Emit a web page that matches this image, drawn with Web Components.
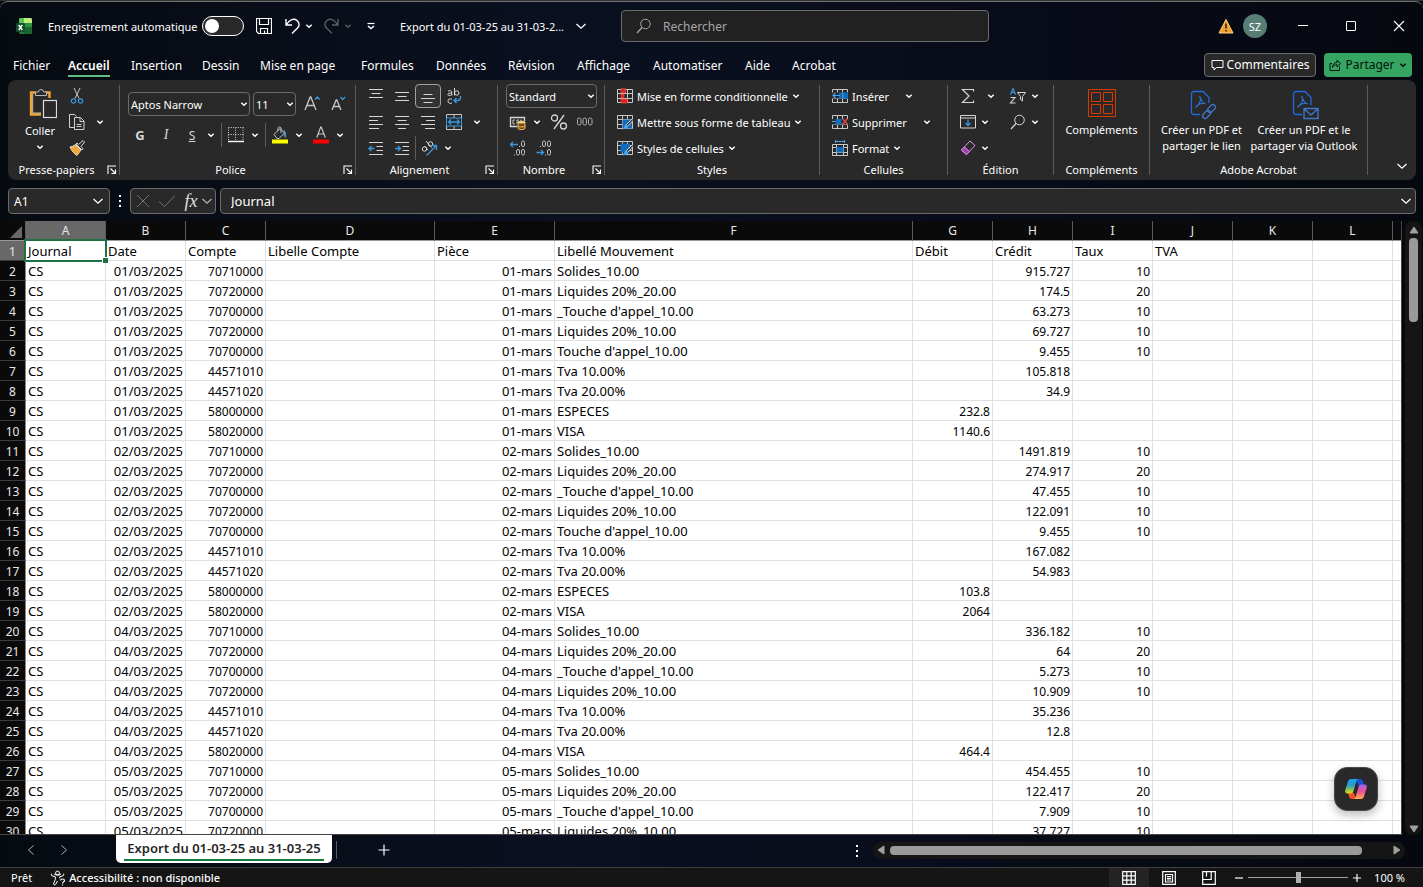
<!DOCTYPE html>
<html lang="fr">
<head>
<meta charset="utf-8">
<title>Export du 01-03-25 au 31-03-25</title>
<style>
  html, body { margin: 0; height: 100%; }
  body { font-family: "Noto Sans", "Open Sans", sans-serif; font-size: 11px; color: #fff; background: #0a0f1c; overflow: hidden; }
</style>
</head>
<body>
<xl-app></xl-app>

<script>
const BASE = `
  *, *::before, *::after { box-sizing: border-box; }
  button, input, select { font: inherit; color: inherit; background: none; border: 0; padding: 0; margin: 0; outline: 0; }
  button { display: inline-flex; align-items: center; justify-content: center; flex: none; white-space: nowrap; }
  a { color: inherit; text-decoration: none; }
`;

class XlElement extends HTMLElement {
  connectedCallback() {
    if (this.shadowRoot) return;
    const root = this.attachShadow({ mode: 'open' });
    root.innerHTML = `<style>${BASE}${this.css()}</style>${this.html()}`;
  }
  css() { return ''; }
  html() { return ''; }
}

/* name: [width, height, markup] — drawn in currentColor unless a colour is part of the icon */
const GRID_BACK = '<path d="M.5 1.500h15v13H.5zM5.500 1.500v13M10.500 1.500v13M.5 5.500h15M.5 10.500h15" stroke="#c8c8c8"/>';
const ICONS = {
  chev: [8, 8, '<path d="M1.300 2.800l2.700 2.400 2.700-2.400" stroke-width="1.500"/>'],
  bigchev: [12, 12, '<path d="M1.500 4l4.500 4.200L10.500 4" stroke-width="1.300"/>'],
  left: [12, 12, '<path d="M8.500 1.500L3.500 6l5 4.500"/>'],
  right: [12, 12, '<path d="M3.500 1.500L8.500 6l-5 4.500"/>'],
  plus: [12, 12, '<path d="M6 .5v11M.5 6h11" stroke-width="1.200"/>'],
  minus: [10, 10, '<path d="M1 5h8" stroke-width="1.200"/>'],
  plusS: [10, 10, '<path d="M1 5h8M5 1v8" stroke-width="1.200"/>'],
  excel: [16, 16, '<g stroke="none"><rect x="3" width="13" height="16" rx="1.500" fill="#1f7a3a"/><path d="M4.500 0H9v5H3V1.500A1.500 1.500 0 014.500 0z" fill="#56c45b"/><path d="M8 0h6.500A1.500 1.500 0 0116 1.500V5H8z" fill="#c0ee7c"/><path d="M3 5h13v5H3z" fill="#2a9447"/><path d="M8 9h8v5.500a1.500 1.500 0 01-1.500 1.500H8z" fill="#1c6430"/><rect y="5" width="9" height="9" rx="1.500" fill="#12512e"/></g><path d="M2.700 7l3.600 5M6.300 7l-3.600 5" stroke="#fff" stroke-width="1.400"/>'],
  save: [16, 16, '<path d="M.5.5h15v15h-13l-2-2zM3.500.5v6h9v-6M4.500 15.500v-5h7v5M8.500 12.500v3" stroke-width="1.200"/>'],
  undo: [18, 18, '<path d="M2 2v6h6M2.500 7.500C5.500 2.500 10 1 13 3.500s2.500 5.500.5 7.500L8 16.500" stroke-width="1.400"/>'],
  redo: [18, 18, '<path d="M15 2v6H9M14.500 7.500C11.500 2.500 7 1 4 3.500S1.500 9 3.500 11L9 16.500" stroke-width="1.400"/>'],
  qat: [10, 10, '<path d="M1.500 2.500h7" stroke-width="1.200"/><path d="M2 5l3 2.500L8 5" stroke-width="1.500"/>'],
  search: [16, 16, '<circle cx="9.500" cy="6" r="4.800"/><path d="M6 9.500L1 15" stroke-width="1.200"/>'],
  warn: [16, 16, '<path d="M8 1.500L15 15H1z" fill="#f0a030" stroke="#ffd27a"/><path d="M8 5.500v5M8 12v1.500" stroke="#3a2a10" stroke-width="1.600"/>'],
  min: [12, 12, '<path d="M1 5.500h10"/>'],
  max: [12, 12, '<rect x="1.500" y="1.500" width="9" height="9" rx=".5"/>'],
  close: [12, 12, '<path d="M1 1l10 10M11 1L1 11" stroke-width="1.100"/>'],
  comment: [13, 12, '<path d="M1 1.500h11v7H5.500L3 11V8.500H1z"/>'],
  share: [12, 12, '<path d="M3 4.500H1v7h9.500v-4M3.500 8.500C3.500 5 6 3.500 8 3.500V1.200L11.500 4.600 8 8V5.700C6 5.700 4.500 6.500 3.500 8.500z"/>'],
  paste: [34, 32, '<g transform="translate(6)"><path d="M7 4.500H2v22h10M16 4.500h4.500V10" stroke="#f0a33a" stroke-width="2.400"/><path d="M3.700 6v19H12" stroke="#fbe0b0" stroke-width=".8"/><path d="M6.500 7.500V4h3a2.500 2.500 0 015 0h3v3.500z" stroke="#b8b8b8" fill="#292929"/><rect x="14.500" y="12.500" width="13" height="17" fill="#292929" stroke="#dcdcdc" stroke-width="1.200"/></g>'],
  cut: [14, 16, '<path d="M4 0l5 10.500M10 0L5 10.500" stroke="#c8c8c8"/><circle cx="3.500" cy="13" r="2.200" stroke="#3a96dd" stroke-width="1.200"/><circle cx="10.500" cy="13" r="2.200" stroke="#3a96dd" stroke-width="1.200"/>'],
  copy: [18, 18, '<path d="M7 14.500H1.500v-13h5l2 2" stroke="#d0d0d0"/><path d="M6.500 4.500h6l3.500 3.500v8.500H6.500zM12 4.500V8.500h4M8.500 11.500h5M8.500 13.500h5" stroke="#d0d0d0" fill="#292929"/>'],
  brush: [16, 16, '<path d="M1 7c2 0 4-1 5.500-2.500L12 10c-1.500 2-3 4-4 5.500C5.500 14 2.500 11 1 7z" fill="#f0a840" stroke="#f8d290"/><path d="M1 7c2 0 4-1 5.500-2.500L12 10" stroke="#d8d8d8" fill="none"/><path d="M7 4l6 6 1-1.500-2-2L15.500 2 14 .5 9.500 4.500 8 3z" fill="#292929" stroke="#d8d8d8"/>'],
  Abig: [16, 18, '<path d="M1 15L6.200 2h.6L12 15M3 10.500h7" stroke="#c8c8c8" stroke-width="1.300"/><path d="M11 4.500L13.300 2l2.300 2.500" stroke="#3a96dd" stroke-width="1.300"/>'],
  Asmall: [16, 18, '<path d="M2 15L6.200 5h.6L11 15M3.500 11.500h6" stroke="#c8c8c8" stroke-width="1.300"/><path d="M10.500 2l2.300 2.500L15 2" stroke="#3a96dd" stroke-width="1.300"/>'],
  border: [16, 16, '<path d="M.5.5h15M.5 7.500h15" stroke="#d0d0d0" stroke-dasharray="1 1.330"/><path d="M.5.5v14M7.500.5v14M15 .5v14" stroke="#d0d0d0" stroke-dasharray="1 1.330"/><path d="M0 14.500h16" stroke="#fff" stroke-width="1.400"/>'],
  fill: [18, 18, '<path d="M3 8.500l6-6 4.500 4.500-5.500 5.500H6z" stroke="#c8c8c8"/><path d="M7 5V2.500a1.500 1.500 0 013 0V7" stroke="#c8c8c8"/><path d="M12.500 4c2 1 2.500 4 2 7.500-1.500-1-1.500-3-2-5" fill="#5a9fd8" stroke="#5a9fd8" stroke-width=".6"/><path d="M1 15.500h16" stroke="#ff0" stroke-width="4"/>'],
  fontcolor: [18, 18, '<path d="M4.800 11.500L8.700 1h.6l3.900 10.500M6 8h6" stroke="#c8c8c8" stroke-width="1.200"/><path d="M1 15.500h16" stroke="#f00" stroke-width="4"/>'],
  top: [16, 16, '<path d="M1 1.500h14M3.500 5.500h9M1 9.500h14"/>'],
  mid: [16, 16, '<path d="M1 4.500h14M3.500 8.500h9M1 12.500h14"/>'],
  bot: [16, 16, '<path d="M3.500 6.500h9M1 10.500h14M3.500 14.500h9"/>'],
  al: [16, 16, '<path d="M1 2.500h14M1 6.500h9M1 10.500h14M1 14.500h10"/>'],
  ac: [16, 16, '<path d="M1 2.500h14M3.500 6.500h9M1 10.500h14M4 14.500h8"/>'],
  ar: [16, 16, '<path d="M1 2.500h14M6 6.500h9M1 10.500h14M5 14.500h10"/>'],
  merge: [16, 16, '<path d="M.5.500h15v15H.5zM8 .5v4M8 12v4" stroke="#c8c8c8"/><path d="M.5 4h15v8H.5z" stroke="#3a96dd" fill="#292929"/><path d="M2.500 8h11M5 5.500L2.500 8 5 10.500M11 5.500L13.500 8 11 10.500" stroke="#3a96dd" stroke-width="1.300"/>'],
  outdent: [16, 16, '<path d="M1 2.500h14M8.500 6.500h6.500M8.500 10.500h6.500M1 14.500h14"/><path d="M1 8.500h5.500M3.500 6L1 8.500 3.500 11" stroke="#3a96dd" stroke-width="1.300"/>'],
  indent: [16, 16, '<path d="M1 2.500h14M8.500 6.500h6.500M8.500 10.500h6.500M1 14.500h14"/><path d="M1 8.500h5.500M4 6l2.500 2.500L4 11" stroke="#3a96dd" stroke-width="1.300"/>'],
  money: [18, 16, '<path d="M8 12.500H1.500v-9h14V7" stroke="#d8d8d8" stroke-width="1.300"/><path d="M6 6H4v4h2M8 10V6h2M12 8V5.500" stroke="#c8c8c8"/><ellipse cx="12.500" cy="8.500" rx="3.800" ry="1.500" fill="#f8d488" stroke="#f8d488" stroke-width=".6"/><path d="M9 9.500v5c1 1.500 6 1.500 7 0v-5" fill="#6b4a12" stroke="#f8c060"/><path d="M9 12c1 1.300 6 1.300 7 0" stroke="#f8c060"/>'],
  pct: [18, 18, '<circle cx="4.500" cy="5" r="3" stroke-width="1.300"/><circle cx="13.500" cy="13" r="3" stroke-width="1.300"/><path d="M14 2L4 16" stroke-width="1.300"/>'],
  zeros: [18, 10, '<g stroke="#b0b0b0"><rect x="1.500" y="1" width="3.500" height="7" rx="1.700"/><rect x="7" y="1" width="3.500" height="7" rx="1.700"/><rect x="12.500" y="1" width="3.500" height="7" rx="1.700"/></g>'],
  decup: [16, 16, '<path d="M0 4.500h8M3 2L.5 4.500 3 7" stroke="#3a96dd" stroke-width="1.300"/><g stroke="#c0c0c0"><rect x="11.500" y="1" width="3" height="5.500" rx="1.500"/><rect x="6.500" y="9.500" width="3" height="5.500" rx="1.500"/><rect x="11.500" y="9.500" width="3" height="5.500" rx="1.500"/><path d="M9.500 6v1M4.500 14.500v1"/></g>'],
  decdn: [16, 16, '<path d="M.5 12.500h7M5 10l2.500 2.500L5 15" stroke="#3a96dd" stroke-width="1.300"/><g stroke="#c0c0c0"><rect x="6.500" y="1" width="3" height="5.500" rx="1.500"/><rect x="11.500" y="1" width="3" height="5.500" rx="1.500"/><rect x="11.500" y="9.500" width="3" height="5.500" rx="1.500"/><path d="M4.500 6v1M9.500 14.500v1"/></g>'],
  wrap: [16, 18, '<path d="M2 4.200c1.500-1 3.800-.8 3.800 1v3.300M5.800 6C3 6 1.800 6.500 1.800 7.500c0 1.500 3 1.300 4-.3M8.500 1v7.500M6 12.200c-3-1-4 .3-4 2s1.500 2.800 4 1.800"/><circle cx="10.800" cy="6" r="2.200"/><path d="M14.500 9v1.500c0 2-1 3-3 3H8M10.500 11L8 13.500l2.500 2.500" stroke="#3a96dd" stroke-width="1.400"/>'],
  orient: [18, 18, '<circle cx="4.500" cy="10" r="2.200"/><path d="M4.500 7l3.500 4M6 2l5.500 6.500"/><circle cx="10.500" cy="5" r="2.200"/><path d="M6.500 16.500l10-10M12 6.500h4.500V11" stroke="#3a96dd" stroke-width="1.300"/>'],
  cond: [16, 16, GRID_BACK + '<path d="M4 .8h4.500v4H4zM4 6h3v4H4zM4 11h6.500v4H4z" fill="#e02020" stroke="#ff5a50" stroke-width=".6"/>'],
  tabfmt: [16, 16, GRID_BACK + '<path d="M5.500 5.500H15v9H5.500z" fill="#0f6cbd" stroke="none"/><path d="M15.500 4.500L9 11l1.500 1.500 5-5.500" fill="#292929" stroke="#d8d8d8"/><path d="M9.500 10.500c-3 0-1.500 3-4 4.500 3 .8 6-.5 5.500-3z" fill="#4aa3e8" stroke="none"/>'],
  cellstyle: [16, 16, GRID_BACK + '<path d="M3.500 3.500H13v9H3.500z" fill="#0f6cbd" stroke="none"/><path d="M15.500 4.500L9 11l1.500 1.500 5-5.500" fill="#292929" stroke="#d8d8d8"/><path d="M9.500 10.500c-3 0-1.500 3-4 4.500 3 .8 6-.5 5.500-3z" fill="#4aa3e8" stroke="none"/>'],
  insert: [16, 16, GRID_BACK + '<path d="M0 4.500h16v6H0z" fill="#292929" stroke="none"/><path d="M7 4.500h9v6H7z" fill="#0f6cbd" stroke="none"/><path d="M11 4.500v6" stroke="#4aa3e8"/><path d="M.8 7.500H8M3.500 5L.8 7.500 3.500 10" stroke="#4aa3e8" stroke-width="1.200"/>'],
  remove: [16, 16, GRID_BACK + '<path d="M0 5h16v5.500H0z" fill="#292929" stroke="none"/><path d="M3.500 5h6v5.500h-6z" fill="#0f6cbd" stroke="none"/><path d="M0 7.500h3.500" stroke="#4aa3e8"/><path d="M10.500 4.500l5 6M15.500 4.500l-5 6" stroke="#e04a4a" stroke-width="1.300"/>'],
  format: [16, 16, '<path d="M.5 4.500h15v11H.5zM4.500 4.500v11M11.500 4.500v11M.5 12.500h15M.5 7.500h15" stroke="#c8c8c8"/><path d="M4.500 7h7v5.500h-7z" fill="#0f6cbd" stroke="none"/><path d="M3.500 1.500h9M3.500 0v3M12.500 0v3" stroke="#4aa3e8"/>'],
  sigma: [14, 16, '<path d="M12.500 3.500v-2h-11L8 8l-6.500 6.500h11v-2" stroke-width="1.200"/>'],
  sort: [18, 16, '<path d="M1.500 6.500L4 .500 6.500 6.500M2.500 4.500h3" stroke="#3a96dd" stroke-width="1.200"/><path d="M1.500 9.500H6L1.500 15H6.500" stroke-width="1.100"/><path d="M8.500 4.500h8L13.500 8.500V13l-2-1.500v-3z"/>'],
  filldown: [16, 14, '<path d="M.5.500h15v12.500H.5zM.5 3h15"/><path d="M8 4.500v6M5.500 8L8 10.500 10.500 8" stroke="#3a96dd" stroke-width="1.300"/>'],
  eraser: [16, 16, '<path d="M10 1l5 4.500-8.500 9L1.500 10z" stroke="#e098e8"/><path d="M4.500 7l5 4.500-3 3.200-5-4.700z" fill="#a83ab8" stroke="#e098e8"/>'],
  addins: [28, 28, '<path d="M.5.500h27v27H.5zM3.500 3.500h9v9h-9zM15.500 3.500h9v9h-9zM3.500 15.500h9v9h-9zM15.500 15.500h9v9h-9z" stroke="#d83b01"/>'],
  pdflink: [32, 30, '<g transform="translate(3)"><path d="M11 24.500H5a2.500 2.500 0 01-2.500-2.500V4A2.500 2.500 0 015 1.500h9l6 6V13" stroke="#1f6be0" stroke-width="1.300"/><path d="M10.500 6c2 5 3 7 6.500 8M11.500 9c0 3-2 6-5 8.500 2-3 6-4.500 9.500-4" stroke="#2f6fd0" stroke-width="1.200"/><g stroke="#3f74c8" stroke-width="1.400"><rect x="18" y="16" width="9" height="5" rx="2.500" transform="rotate(-45 22.500 18.500)"/><rect x="13" y="22" width="9" height="5" rx="2.500" transform="rotate(-45 17.500 24.500)"/></g></g>'],
  pdfmail: [32, 30, '<g transform="translate(3)"><path d="M11 24.500H5a2.500 2.500 0 01-2.500-2.500V4A2.500 2.500 0 015 1.500h9l6 6V15" stroke="#1f6be0" stroke-width="1.300"/><path d="M10.500 6c2 5 3 7 6.500 8M11.500 9c0 3-2 6-5 8.500 2-3 6-4.500 9.500-4" stroke="#2f6fd0" stroke-width="1.200"/><path d="M13 18.500h14v10H13zM13.500 19l6.500 6 6.500-6" stroke="#3f74c8" stroke-width="1.400"/></g>'],
  launch: [10, 10, '<path d="M1 9V1h8M3.500 3.500l5 5M4.500 8.500h4v-4" stroke-width="1.100"/>'],
  cancel: [14, 14, '<path d="M1 1l12 12M13 1L1 13"/>'],
  check: [18, 14, '<path d="M1 7.500L6.500 12.500 17 1.500"/>'],
  dots: [4, 14, '<path d="M1 1h2v2H1zM1 6h2v2H1zM1 11h2v2H1z" fill="currentColor" stroke="none"/>'],
  corner: [12, 12, '<path d="M12 0v12H0z" fill="#686868" stroke="none"/>'],
  access: [16, 16, '<circle cx="7.500" cy="3" r="1.900"/><path d="M2 3.500C1 4 1 5.500 2 5.800l3.300 1v2.500L3.500 14c.3 1.200 1.800 1.200 2.300.2L7.500 11M13 3.500c1 .5 1 2 0 2.300l-3.300 1v1.500M4 4l2 1h3l2-1" /><path d="M10.500 10.500c0-2 4-2 4 0 0 1.500-2 1.500-2 3M12.500 14.500v1" stroke-width="1.200"/>'],
  vnormal: [14, 14, '<path d="M.7.700h12.600v12.600H.7zM4.800.7v12.600M9.200.7v12.600M.7 4.800h12.600M.7 9.200h12.600" stroke-width="1.200"/>'],
  vpage: [14, 14, '<path d="M.7.700h12.600v12.600H.7zM3.500 3.500h7v7.500h-7zM5 5.500h4M5 7.300h4M5 9h4" stroke-width="1.200"/>'],
  vbreak: [14, 14, '<path d="M.7.700h12.600v12.600H.7zM.7 8.500h8.500V.7M4.500.7V5.500" stroke-width="1.200"/>'],
  triup: [10, 8, '<path d="M5 1l4 6H1z" fill="#a0a0a0" stroke="#a0a0a0" stroke-linejoin="round"/>'],
  tridn: [10, 8, '<path d="M5 7l4-6H1z" fill="#a0a0a0" stroke="#a0a0a0" stroke-linejoin="round"/>'],
  tril: [8, 10, '<path d="M1 5l6-4v8z" fill="#a0a0a0" stroke="#a0a0a0" stroke-linejoin="round"/>'],
  trir: [8, 10, '<path d="M7 5L1 1v8z" fill="#a0a0a0" stroke="#a0a0a0" stroke-linejoin="round"/>'],
  copilot: [24, 24, `<defs>
    <linearGradient id="a" x1="0" y1="0" x2="0" y2="1"><stop offset="0" stop-color="#1aa0f0"/><stop offset=".45" stop-color="#2a9ec8"/><stop offset=".75" stop-color="#8cc850"/><stop offset="1" stop-color="#f0d020"/></linearGradient>
    <linearGradient id="b" x1="0" y1="0" x2="0" y2="1"><stop offset="0" stop-color="#a860f0"/><stop offset=".5" stop-color="#f05090"/><stop offset="1" stop-color="#ffb050"/></linearGradient></defs>
    <g stroke="none"><path d="M12 2h4.500c1.500 0 2 1 2.500 2.500L20 8h-6z" fill="#1b4fd8"/><path d="M12 22H7.500C6 22 5.500 21 5 19.500L4 16h6z" fill="#f0502a"/><path d="M7 2h7.500c-1 0-1.700 1-2 2L9.500 14c-.4 1.500-1 2.500-2.500 2.500H3.500C1.500 16.500.8 15 1.300 13L4 4.500C4.500 3 5.500 2 7 2z" fill="url(#a)"/><path d="M17 22H9.500c1 0 1.700-1 2-2l3-10c.4-1.500 1-2.500 2.500-2.500h3.500c2 0 2.700 1.500 2.200 3.500L20 19.500c-.5 1.500-1.500 2.500-3 2.500z" fill="url(#b)"/></g>`],
};

customElements.define('xl-icon', class extends XlElement {
  css() { return `:host { display: block; flex: none; } svg { display: block; }`; }
  html() {
    const [w, h, body] = ICONS[this.getAttribute('name')];
    return `<svg width="${w}" height="${h}" viewBox="0 0 ${w} ${h}" fill="none" stroke="currentColor" aria-hidden="true">${body}</svg>`;
  }
});
const icon = (name) => `<xl-icon name="${name}"></xl-icon>`;

/* ---------- title bar ---------- */
customElements.define('xl-titlebar', class extends XlElement {
  css() { return `
    :host { display: flex; align-items: center; height: 49px; border-top: 1px solid #6e7072; padding-left: 16px; border-radius: 8px 8px 0 0; }
    .auto { display: flex; align-items: center; margin-left: 16px; }
    .auto span { width: 154px; }
    .switch { appearance: none; width: 42px; height: 20px; border: 1px solid #fff; border-radius: 10px; background: #292929; display: flex; align-items: center; padding: 0 2px; }
    .switch::before { content: ""; width: 14px; height: 14px; border-radius: 50%; background: #fff; }
    .tools { display: flex; align-items: center; margin-left: 11px; }
    .tools button { height: 28px; }
    .w18 { width: 18px; } .w14 { width: 14px; }
    .undo { margin-left: 11px; } .redo { margin-left: 7px; } .off { color: #5c5c5c; } .qat { margin-left: 9px; }
    .file { margin-left: 22px; gap: 11px; }
    .search { flex: 0 1 368px; min-width: 120px; margin-left: 34px; height: 32px; display: flex; align-items: center; gap: 11px; padding: 0 14px; border: 1px solid #6b6b6b; border-radius: 4px; background: #212121; color: #a8a8a8; font-size: 12px; }
    .search input { flex: 1; min-width: 0; }
    .search input::placeholder { color: #a8a8a8; opacity: 1; }
    .space { flex: 1; }
    .avatar { width: 24px; height: 24px; border-radius: 50%; background: #587d74; margin: 0 12px 0 9px; }
    .win { width: 48px; height: 32px; }
  `; }
  html() { return `
    ${icon('excel')}
    <label class="auto"><span>Enregistrement automatique</span><input class="switch" type="checkbox" role="switch"></label>
    <div class="tools">
      <button class="w18" aria-label="Enregistrer">${icon('save')}</button>
      <button class="w18 undo" aria-label="Annuler">${icon('undo')}</button>
      <button class="w14" aria-label="Options d’annulation">${icon('chev')}</button>
      <button class="w18 redo off" aria-label="Rétablir">${icon('redo')}</button>
      <button class="w14 off" aria-label="Options de rétablissement">${icon('chev')}</button>
      <button class="w14 qat" aria-label="Personnaliser">${icon('qat')}</button>
      <button class="file"><span>Export du 01-03-25 au 31-03-2...</span>${icon('bigchev')}</button>
    </div>
    <label class="search">${icon('search')}<input type="text" placeholder="Rechercher" aria-label="Rechercher"></label>
    <div class="space"></div>
    ${icon('warn')}
    <button class="avatar">SZ</button>
    <button class="win" aria-label="Réduire">${icon('min')}</button>
    <button class="win" aria-label="Agrandir">${icon('max')}</button>
    <button class="win" aria-label="Fermer">${icon('close')}</button>`; }
});

/* ---------- ribbon tabs ---------- */
customElements.define('xl-tabs', class extends XlElement {
  css() { return `
    :host { display: flex; align-items: center; height: 30px; padding: 0 11px 0 13px; font-size: 12px; line-height: 18px; }
    nav { display: grid; grid-template-columns: 55px 63px 71px 58px 101px 75px 72px 69px 76px 92px 47px auto; justify-content: start; justify-items: start; flex: 1; }
    nav a { border-bottom: 2px solid transparent; padding: 4px 0 0; white-space: nowrap; }
    nav a[aria-current] { font-weight: 600; border-color: #5fbf82; }
    .act { height: 24px; border-radius: 4px; }
    .comments { width: 112px; gap: 3px; border: 1px solid #6b6b6b; background: #292929; }
    .share { width: 88px; gap: 4px; margin-left: 8px; background: #36a562; color: #04140a; }
  `; }
  html() {
    const tabs = ['Fichier', 'Accueil', 'Insertion', 'Dessin', 'Mise en page', 'Formules', 'Données', 'Révision', 'Affichage', 'Automatiser', 'Aide', 'Acrobat'];
    return `<nav>${tabs.map(t => `<a href="#"${t === 'Accueil' ? ' aria-current="page"' : ''}>${t}</a>`).join('')}</nav>
    <button class="act comments">${icon('comment')}<span>Commentaires</span></button>
    <button class="act share">${icon('share')}<span>Partager</span>${icon('chev')}</button>`;
  }
});

/* ---------- ribbon group: controls in the slot, caption below ---------- */
customElements.define('xl-group', class extends XlElement {
  css() { return `
    :host { display: flex; flex-direction: column; flex: none; position: relative; padding-top: 3px; }
    :host::after { content: ""; width: 1px; background: #5c5c5c; position: absolute; right: 0; top: 5px; bottom: 5px; }
    .body { height: 79px; }
    footer { display: flex; align-items: center; height: 16px; line-height: 16px; padding-right: 1px; }
    footer span { flex: 1; text-align: center; }
    footer button { width: 14px; height: 14px; }
  `; }
  html() { return `
    <div class="body"><slot></slot></div>
    <footer><span>${this.getAttribute('label')}</span>${this.hasAttribute('launcher') ? `<button aria-label="Plus d’options">${icon('launch')}</button>` : ''}</footer>`; }
});

/* ---------- ribbon ---------- */
const b = (name, label, cls = '') => `<button class="i ${cls}" aria-label="${label}">${icon(name)}</button>`;
const c = (cls = '') => `<button class="c ${cls}" aria-label="Plus">${icon('chev')}</button>`;
customElements.define('xl-ribbon', class extends XlElement {
  css() { return `
    :host { display: flex; height: 100px; margin: 0 7px 0 8px; background: #292929; border-radius: 8px; color: #fff; }
    .row { display: flex; align-items: center; height: 26px; }
    .i { width: 26px; height: 24px; color: #d6d6d6; }
    .c { width: 11px; height: 24px; }
    .c20 { width: 20px; } .c8 { width: 8px; margin-right: 12px; }
    .on { border: 1px solid #a0a0a0; border-radius: 4px; background: #333; }
    .sep { width: 1px; height: 24px; background: #5c5c5c; }
    .g1 { width: 112px; } .g2 { width: 236px; } .g3 { width: 142px; } .g4 { width: 107px; } .g5 { width: 215px; }
    .g6 { width: 128px; } .g7 { width: 106px; } .g8 { width: 96px; } .g9 { width: 218px; }
    .clip { display: flex; padding-left: 8px; }
    .big { flex-direction: column; justify-content: flex-start; height: 77px; padding-top: 6px; line-height: 16px; }
    .big span { margin-top: 5px; }
    .paste { width: 48px; padding-top: 5px; }
    .paste span { margin: 3px 0 4px; }
    .field { position: relative; display: block; height: 24px; }
    .field select { appearance: none; width: 100%; height: 24px; padding: 0 2px; border: 1px solid #6b6b6b; border-radius: 4px; background: #292929; }
    .field xl-icon { position: absolute; right: 2px; top: 8px; pointer-events: none; }
    .font { width: 122px; } .size { width: 43px; } .num { width: 91px; margin-left: 1px; }
    .police { padding: 9px 0 0 7px; }
    .police .row { height: 24px; margin-bottom: 7px; }
    .police .first { padding-left: 1px; gap: 3px; }
    .first .i + .i { margin-left: -3px; }
    .police .sep { margin: 0 1px 0 5px; }
    .i b { font-size: 13px; font-weight: 700; } .i i { font: italic 14px "Liberation Serif", serif; } .i u { font-size: 12px; }
    .fc { margin-left: 4px; }
    .pad7 { padding-left: 7px; }
    .pad12 { padding-left: 12px; }
    .cmd { gap: 4px; height: 24px; }
    .cmd + .c { margin-left: 10px; width: 20px; }
    .r2 { margin-left: 4px; }
    .big2 { display: flex; }
    .wide { width: 95px; }
    .pdf { padding-left: 3px; }
    .pdf .a { width: 97px; } .pdf .b { width: 108px; }
    .pdf span { margin-top: 2px; }
    .pdf .big { padding-top: 7px; }
    .end { flex: 1; display: flex; align-items: flex-end; justify-content: flex-end; padding: 8px; }
  `; }
  html() { return `
    <xl-group class="g1" label="Presse-papiers" launcher><div class="clip">
      <button class="big paste">${icon('paste')}<span>Coller</span>${icon('chev')}</button>
      <div><div class="row">${b('cut', 'Couper')}</div><div class="row">${b('copy', 'Copier')}${c('c20')}</div><div class="row">${b('brush', 'Reproduire la mise en forme')}</div></div>
    </div></xl-group>
    <xl-group class="g2" label="Police" launcher><div class="police">
      <div class="row first">
        <label class="field font"><select aria-label="Police"><option>Aptos Narrow</option></select>${icon('chev')}</label>
        <label class="field size"><select aria-label="Taille"><option>11</option></select>${icon('chev')}</label>
        ${b('Abig', 'Augmenter la taille')}${b('Asmall', 'Réduire la taille')}
      </div>
      <div class="row">
        <button class="i"><b>G</b></button><button class="i"><i>I</i></button><button class="i"><u>S</u></button>${c()}
        <div class="sep"></div>${b('border', 'Bordures')}${c()}
        <div class="sep"></div>${b('fill', 'Remplissage')}${c()}${b('fontcolor', 'Couleur de police', 'fc')}${c()}
      </div>
    </div></xl-group>
    <xl-group class="g3" label="Alignement" launcher><div class="pad7">
      <div class="row">${b('top', 'En haut')}${b('mid', 'Au centre')}${b('bot', 'En bas', 'on')}${b('wrap', 'Renvoyer à la ligne')}</div>
      <div class="row">${b('al', 'Gauche')}${b('ac', 'Centrer')}${b('ar', 'Droite')}${b('merge', 'Fusionner')}${c('c20')}</div>
      <div class="row">${b('outdent', 'Diminuer le retrait')}${b('indent', 'Augmenter le retrait')}<div class="sep"></div>${b('orient', 'Orientation')}${c()}</div>
    </div></xl-group>
    <xl-group class="g4" label="Nombre" launcher><div class="pad7">
      <div class="row"><label class="field num"><select aria-label="Format de nombre"><option>Standard</option></select>${icon('chev')}</label></div>
      <div class="row">${b('money', 'Format comptable')}${c()}<div class="r2"></div>${b('pct', 'Pourcentage')}${b('zeros', 'Séparateur de milliers')}</div>
      <div class="row">${b('decup', 'Ajouter une décimale')}${b('decdn', 'Réduire les décimales')}</div>
    </div></xl-group>
    <xl-group class="g5" label="Styles"><div class="pad12">
      <div class="row"><button class="cmd">${icon('cond')}<span>Mise en forme conditionnelle</span>${icon('chev')}</button></div>
      <div class="row"><button class="cmd">${icon('tabfmt')}<span>Mettre sous forme de tableau</span>${icon('chev')}</button></div>
      <div class="row"><button class="cmd">${icon('cellstyle')}<span>Styles de cellules</span>${icon('chev')}</button></div>
    </div></xl-group>
    <xl-group class="g6" label="Cellules"><div class="pad12">
      <div class="row"><button class="cmd">${icon('insert')}<span>Insérer</span></button>${c()}</div>
      <div class="row"><button class="cmd">${icon('remove')}<span>Supprimer</span></button>${c()}</div>
      <div class="row"><button class="cmd">${icon('format')}<span>Format</span>${icon('chev')}</button></div>
    </div></xl-group>
    <xl-group class="g7" label="Édition"><div class="pad7">
      <div class="row">${b('sigma', 'Somme')}${c('c20')}${b('sort', 'Trier et filtrer', 'r2')}${c('c8')}</div>
      <div class="row">${b('filldown', 'Remplissage')}${c('c8')}${b('search', 'Rechercher', 'r2')}${c('c8')}</div>
      <div class="row">${b('eraser', 'Effacer')}${c('c8')}</div>
    </div></xl-group>
    <xl-group class="g8" label="Compléments"><button class="big wide">${icon('addins')}<span>Compléments</span></button></xl-group>
    <xl-group class="g9" label="Adobe Acrobat"><div class="big2 pdf">
      <button class="big a">${icon('pdflink')}<span>Créer un PDF et<br>partager le lien</span></button>
      <button class="big b">${icon('pdfmail')}<span>Créer un PDF et le<br>partager via Outlook</span></button>
    </div></xl-group>
    <div class="end"><button aria-label="Réduire le ruban">${icon('bigchev')}</button></div>`; }
});

/* ---------- formula bar ---------- */
customElements.define('xl-formula', class extends XlElement {
  css() { return `
    :host { display: flex; align-items: center; padding: 8px 7px 7px 8px; font-size: 12px; }
    .box { display: flex; align-items: center; height: 26px; border: 1px solid #6b6b6b; border-radius: 4px; background: #292929; }
    .box input { flex: 1; min-width: 0; }
    .name { width: 102px; padding: 0 5px; }
    .dots { margin: 0 8px; }
    .fx { width: 86px; color: #707070; padding-left: 5px; gap: 8px; }
    .fx .f { color: #e0e0e0; width: 18px; margin-left: -2px; font: italic 18px/20px "Liberation Serif", serif; }
    .fx .f + button { margin-left: -7px; color: #b0b0b0; }
    .text { flex: 1; margin-left: 4px; padding: 0 3px 0 10px; font-size: 13px; }
  `; }
  html() { return `
    <div class="box name"><input type="text" value="A1" aria-label="Zone Nom"><button aria-label="Liste des noms">${icon('bigchev')}</button></div>
    <div class="dots">${icon('dots')}</div>
    <div class="box fx"><button aria-label="Annuler">${icon('cancel')}</button><button aria-label="Entrer">${icon('check')}</button><button class="f">fx</button><button aria-label="Plus">${icon('bigchev')}</button></div>
    <div class="box text"><input type="text" value="Journal" aria-label="Barre de formule"><button aria-label="Développer">${icon('bigchev')}</button></div>`; }
});

/* ---------- sheet ---------- */
const SOL = 'Solides_10.00', L20 = 'Liquides 20%_20.00', UT = "_Touche d'appel_10.00", L10 = 'Liquides 20%_10.00', TA = "Touche d'appel_10.00", T10 = 'Tva 10.00%', T20 = 'Tva 20.00%', ESP = 'ESPECES', VISA = 'VISA';
/* [account, label, debit, credit, rate] per day of March */
const DAYS = {
  '01': [[70710000, SOL, '', 915.727, 10], [70720000, L20, '', 174.5, 20], [70700000, UT, '', 63.273, 10], [70720000, L10, '', 69.727, 10], [70700000, TA, '', 9.455, 10], [44571010, T10, '', 105.818, ''], [44571020, T20, '', 34.9, ''], [58000000, ESP, 232.8, '', ''], [58020000, VISA, 1140.6, '', '']],
  '02': [[70710000, SOL, '', 1491.819, 10], [70720000, L20, '', 274.917, 20], [70700000, UT, '', 47.455, 10], [70720000, L10, '', 122.091, 10], [70700000, TA, '', 9.455, 10], [44571010, T10, '', 167.082, ''], [44571020, T20, '', 54.983, ''], [58000000, ESP, 103.8, '', ''], [58020000, VISA, 2064, '', '']],
  '04': [[70710000, SOL, '', 336.182, 10], [70720000, L20, '', 64, 20], [70700000, UT, '', 5.273, 10], [70720000, L10, '', 10.909, 10], [44571010, T10, '', 35.236, ''], [44571020, T20, '', 12.8, ''], [58020000, VISA, 464.4, '', '']],
  '05': [[70710000, SOL, '', 454.455, 10], [70720000, L20, '', 122.417, 20], [70700000, UT, '', 7.909, 10], [70720000, L10, '', 37.727, 10]],
};
customElements.define('xl-sheet', class extends XlElement {
  css() { return `
    :host { display: flex; flex: 1; min-height: 0; }
    .view { flex: 1; min-width: 0; overflow: hidden; background: #fff; border-right: 1px solid #444; border-bottom: 1px solid #444; }
    table { table-layout: fixed; width: 100%; border-collapse: separate; border-spacing: 0; color: #000; font-size: 13px; }
    th, td { height: 20px; line-height: 17px; padding: 2px 2px 0; white-space: nowrap; overflow: hidden; border-right: 1px solid #e0e0e0; border-bottom: 1px solid #e0e0e0; text-align: left; font-weight: 400; }
    .n { text-align: right; font-size: 12px; }
    .d { text-align: right; }
    th { text-align: center; background: #0a0a0a; color: #e8e8e8; font-size: 12px; border-color: #5c5c5c; padding: 2px 0 0; }
    tbody th { border-right-color: #8a8a8a; border-bottom-color: #3c3c3c; }
    thead th { border-bottom-color: #9a9a9a; padding: 0; line-height: 19px; }
    th.sel { background: #686868; }
    .all xl-icon { float: right; margin: 3px 3px 0 0; }
    tr > :last-child { border-right: 0; }
    td.cur { position: relative; overflow: visible; }
    td.cur::before { content: ""; position: absolute; inset: -2px; border: 2px solid #1e7145; }
    td.cur::after { content: ""; position: absolute; right: -3px; bottom: -3px; width: 6px; height: 6px; background: #1e7145; border: 1px solid #fff; border-width: 1px 0 0 1px; }
    .scroll { display: flex; flex-direction: column; align-items: center; width: 17px; margin: 0 1px 0 3px; padding: 5px 0 2px; border-radius: 8px; background: #151515; }
    .thumb { width: 9px; height: 84px; margin: 4px 0 auto; border-radius: 4px; background: #9a9a9a; }
  `; }
  html() {
    const widths = [26, 80, 80, 80, 169, 120, 358, 80, 80, 80, 80, 80, 80];
    const heads = ['Journal', 'Date', 'Compte', 'Libelle Compte', 'Pièce', 'Libellé Mouvement', 'Débit', 'Crédit', 'Taux', 'TVA', '', '', ''];
    let n = 1, rows = '';
    for (const [day, lines] of Object.entries(DAYS))
      for (const [acc, text, deb, cred, rate] of lines)
        rows += `<tr><th scope="row">${++n}</th><td>CS</td><td class="d">${day}/03/2025</td><td class="n">${acc}</td><td></td><td class="d">${day}-mars</td><td>${text}</td><td class="n">${deb}</td><td class="n">${cred}</td><td class="n">${rate}</td><td></td><td></td><td></td><td></td></tr>`;
    return `
    <div class="view"><table>
      <colgroup>${widths.map(w => `<col style="width:${w}px">`).join('')}<col></colgroup>
      <thead><tr><th class="all">${icon('corner')}</th>${[...'ABCDEFGHIJKL'].map(l => `<th scope="col"${l === 'A' ? ' class="sel"' : ''}>${l}</th>`).join('')}<th></th></tr></thead>
      <tbody><tr><th scope="row" class="sel">1</th>${heads.map((t, i) => `<td${i ? '' : ' class="cur"'}>${t}</td>`).join('')}</tr>${rows}</tbody>
    </table></div>
    <div class="scroll">${icon('triup')}<div class="thumb"></div>${icon('tridn')}</div>`;
  }
});

/* ---------- sheet tabs ---------- */
customElements.define('xl-sheettabs', class extends XlElement {
  css() { return `
    :host { display: flex; align-items: center; height: 32px; padding: 0 18px 2px 21px; }
    .nav { width: 20px; height: 20px; margin-right: 13px; color: #b0b0b0; }
    .tab { align-self: flex-start; height: 28px; margin-left: 29px; padding: 0 8px; background: #fff; border-radius: 0 0 5px 5px; color: #262626; font-size: 13px; font-weight: 600; }
    .tab span { min-width: 200px; line-height: 20px; border-bottom: 2px solid #107c41; padding-bottom: 1px; }
    .sep { width: 1px; height: 18px; margin-left: 4px; background: #5c5c5c; }
    .add { width: 24px; height: 24px; margin-left: 35px; }
    .space { flex: 1; }
    .dots { margin: 2px 14px 0 0; }
    .scroll { flex: 0 1 532px; display: flex; align-items: center; justify-content: space-between; height: 17px; padding: 0 4px; border-radius: 8px; background: #151515; }
    .thumb { flex: 1; height: 9px; margin: 0 31px 0 5px; border-radius: 4px; background: #9a9a9a; }
  `; }
  html() { return `
    <button class="nav" aria-label="Précédent">${icon('left')}</button><button class="nav" aria-label="Suivant">${icon('right')}</button>
    <button class="tab"><span>Export du 01-03-25 au 31-03-25</span></button>
    <div class="sep"></div>
    <button class="add" aria-label="Nouvelle feuille">${icon('plus')}</button>
    <div class="space"></div>
    <div class="dots">${icon('dots')}</div>
    <div class="scroll">${icon('tril')}<div class="thumb"></div>${icon('trir')}</div>`; }
});

/* ---------- status bar ---------- */
customElements.define('xl-status', class extends XlElement {
  css() { return `
    :host { display: flex; align-items: center; height: 20px; padding: 0 18px 0 11px; border-top: 1px solid #3f3f3f; background: #151515; }
    .acc { gap: 3px; margin-left: 18px; font-weight: 500; }
    .space { flex: 1; }
    .view { width: 40px; height: 19px; }
    .on { background: #242424; }
    .step { width: 10px; height: 16px; }
    .out { margin-left: 5px; }
    input { appearance: none; width: 100px; height: 16px; margin: 0 4px; background: linear-gradient(#a0a0a0, #a0a0a0) center / 100% 1px no-repeat; }
    input::-webkit-slider-thumb { appearance: none; width: 5px; height: 11px; background: #b0b0b0; }
    .pct { width: 43px; text-align: right; }
  `; }
  html() { return `
    <span>Prêt</span>
    <button class="acc">${icon('access')}<span>Accessibilité : non disponible</span></button>
    <div class="space"></div>
    <button class="view on" aria-label="Normal">${icon('vnormal')}</button>
    <button class="view" aria-label="Mise en page">${icon('vpage')}</button>
    <button class="view" aria-label="Sauts de page">${icon('vbreak')}</button>
    <button class="step out" aria-label="Zoom arrière">${icon('minus')}</button>
    <input type="range" min="0" max="200" value="100" aria-label="Zoom">
    <button class="step" aria-label="Zoom avant">${icon('plusS')}</button>
    <span class="pct">100 %</span>`; }
});

/* ---------- application window ---------- */
customElements.define('xl-app', class extends XlElement {
  css() { return `
    :host { display: flex; flex-direction: column; height: 100vh; padding-top: 1px; box-sizing: border-box; position: relative;
      background: linear-gradient(#333 1px, transparent 1px), linear-gradient(90deg, #060a11, #0a1020 40%, #090d1c 62%, #05080f); }
    .copilot { position: absolute; right: 45px; bottom: 76px; width: 44px; height: 44px; border: 1px solid #4a4a4a; border-radius: 13px; background: #292929; box-shadow: 0 4px 10px #0004; }
  `; }
  html() { return `
    <xl-titlebar></xl-titlebar>
    <xl-tabs></xl-tabs>
    <xl-ribbon></xl-ribbon>
    <xl-formula></xl-formula>
    <xl-sheet></xl-sheet>
    <xl-sheettabs></xl-sheettabs>
    <xl-status></xl-status>
    <button class="copilot" aria-label="Copilot">${icon('copilot')}</button>`; }
});
</script>
</body>
</html>
